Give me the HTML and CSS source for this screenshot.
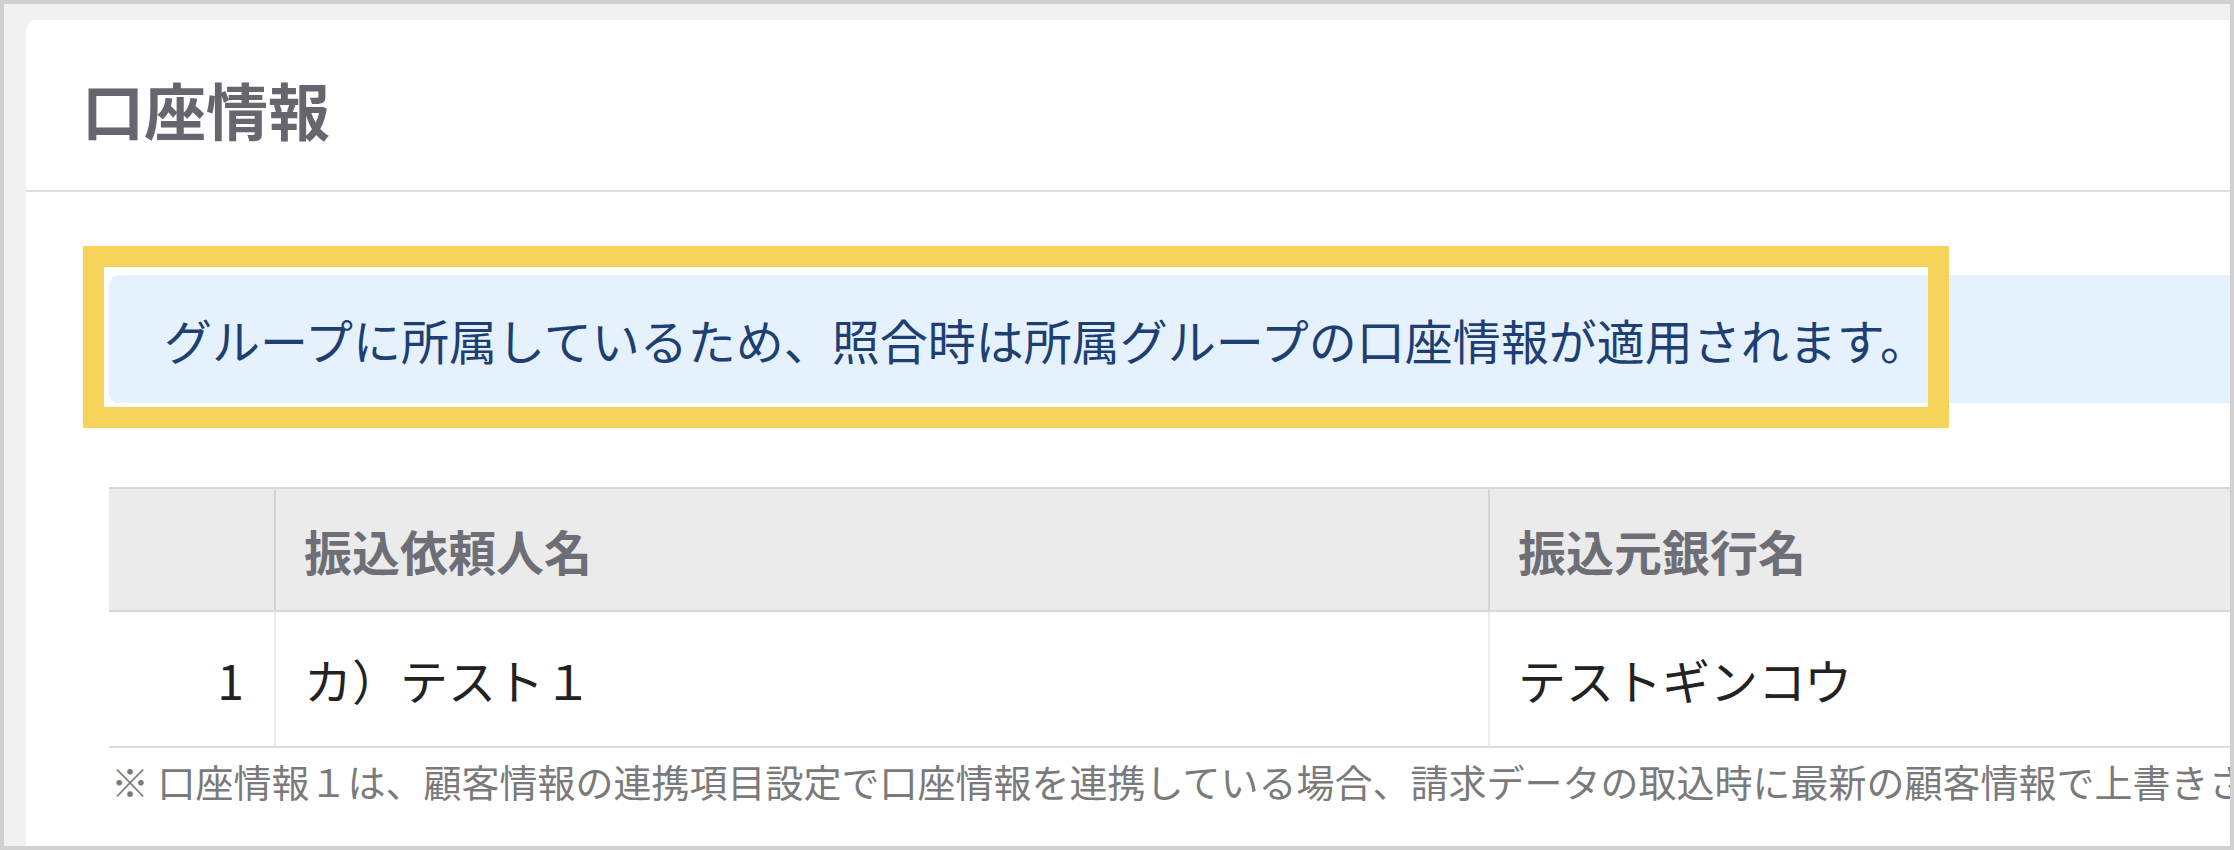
FILE: index.html
```html
<!DOCTYPE html>
<html lang="ja">
<head>
  <meta charset="UTF-8"/>
  <meta name="viewport" content="width=device-width, initial-scale=1"/>
  <title>口座情報</title>
  <link rel="stylesheet" href="styles.css">
</head>
<body>
  <div class="frame">
    <section class="card">
      <header class="card-head">
        <h1 class="card-title">口座情報</h1>
      </header>

      <div class="card-body">
        <!-- notice + annotation frame -->
        <div class="notice-wrap">
          <div class="notice">グループに所属しているため、照合時は所属グループの口座情報が適用されます。</div>
          <div class="highlight"></div>
        </div>

        <table class="account-table">
          <thead>
            <tr>
              <th class="col-no"></th>
              <th class="col-name">振込依頼人名</th>
              <th class="col-bank">振込元銀行名</th>
            </tr>
          </thead>
          <tbody>
            <tr>
              <td class="col-no">1</td>
              <td class="col-name">カ）テスト１</td>
              <td class="col-bank">テストギンコウ</td>
            </tr>
          </tbody>
        </table>

        <p class="note">※ 口座情報１は、顧客情報の連携項目設定で口座情報を連携している場合、請求データの取込時に最新の顧客情報で上書きされます。</p>
      </div>
    </section>
  </div>
</body>
</html>
```

FILE: styles.css
```css
/* page + outer frame */
html, body {
  margin: 0; padding: 0;
  background: #fff;
  font-family: "Noto Sans CJK JP", "Noto Sans", sans-serif;
}

.frame {
  box-sizing: border-box;
  width: 2234px;
  height: 850px;
  border: 4px solid #d0d0d0;
  background: #f1f1f1;
  padding: 16px 0 0 22px;
  overflow: hidden;
}

/* card (wider than the frame, clipped on the right) */
.card {
  width: 2400px;
  height: 100%;
  background: #fff;
  border-radius: 10px 0 0 0;
}

.card-head {
  box-sizing: border-box;
  height: 172px;
  display: flex;
  align-items: center;
  padding: 8px 0 0 56px;
  border-bottom: 2px solid #dcdce2;
}

.card-title {
  margin: 0;
  font-size: 62px;
  font-weight: 700;
  line-height: 1;
  color: #66666e;
}

.card-body {
  padding: 83px 0 0 83px;
}

/* blue notice */
.notice-wrap {
  position: relative;
}

.notice {
  box-sizing: border-box;
  height: 128px;
  display: flex;
  align-items: center;
  padding-left: 55px;
  background: #e5f2fe;
  border-radius: 10px;
  font-size: 48px;
  color: #1d3f73;
  white-space: nowrap;
}

/* yellow annotation box drawn over the notice */
.highlight {
  position: absolute;
  left: -26px;
  top: -29px;
  width: 1866px;
  height: 182px;
  box-sizing: border-box;
  border: 21px solid #f6d45b;
}

/* table */
.account-table {
  margin-top: 84px;
  border-collapse: collapse;
  table-layout: fixed;
  width: 2300px;
  font-size: 48px;
}

.account-table th,
.account-table td {
  padding: 0 28px;
  text-align: left;
  white-space: nowrap;
}

.account-table th {
  height: 121px;
  background: #ebebeb;
  color: #6e6e76;
  font-weight: 700;
  border-top: 2px solid #d6d6dc;
  border-bottom: 2px solid #d6d6dc;
  border-left: 2px solid #d3d3d8;
}

.account-table td {
  height: 134px;
  color: #222;
  border-bottom: 2px solid #dcdce2;
  border-left: 2px solid #ececef;
}

.account-table .col-no {
  width: 109px;
  border-left: none;
}

.account-table td.col-no {
  text-align: right;
  padding-right: 30px;
}

.account-table .col-name {
  width: 1156px;
}

.note {
  margin: 7px 0 0 2px;
  font-size: 38px;
  line-height: 52px;
  color: #7a7a7a;
  white-space: nowrap;
}
```
